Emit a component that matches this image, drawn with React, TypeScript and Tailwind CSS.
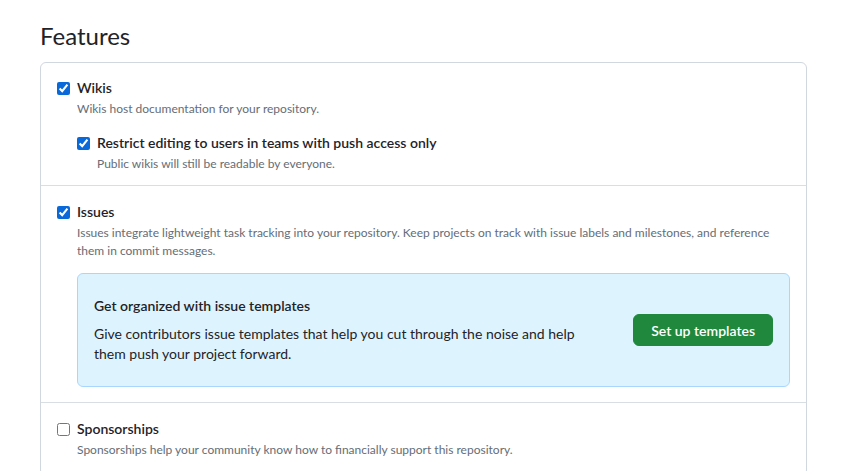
import React from 'react'

const font = { fontFamily: 'Lato, "Liberation Sans", sans-serif' }

function Check({
  checked,
  label,
  note,
}: {
  checked: boolean
  label: string
  note: React.ReactNode
}) {
  return (
    <div className="flex items-start">
      <input
        type="checkbox"
        defaultChecked={checked}
        className="mt-[4px] mr-[7px] h-[13px] w-[13px] shrink-0 accent-[#0969da]"
      />
      <div>
        <label className="block text-[14px] leading-[20px] font-semibold text-[#1f2328]">{label}</label>
        <p className="mt-[2px] text-[12px] leading-[18px] text-[#656d76]">{note}</p>
      </div>
    </div>
  )
}

export default function App() {
  return (
    <div className="min-h-screen bg-white px-10 pt-[20px]" style={font}>
      <h2 className="mb-[10px] text-[24px] leading-[32px] font-normal text-[#1f2328]">Features</h2>

      <div className="w-[767px] rounded-[6px] border border-[#d0d7de]">
        {/* Wikis */}
        <div className="border-b border-[#d8dee4] px-4 pt-[15px] pb-[12px]">
          <Check checked label="Wikis" note="Wikis host documentation for your repository." />
          <div className="mt-[15px] ml-[20px]">
            <Check
              checked
              label="Restrict editing to users in teams with push access only"
              note="Public wikis will still be readable by everyone."
            />
          </div>
        </div>

        {/* Issues */}
        <div className="border-b border-[#d8dee4] px-4 pt-[16px] pb-[15px]">
          <Check
            checked
            label="Issues"
            note="Issues integrate lightweight task tracking into your repository. Keep projects on track with issue labels and milestones, and reference them in commit messages."
          />
          <div className="mt-[13px] ml-[20px] flex items-center rounded-[6px] border border-[#a9d6ff] bg-[#ddf4ff] px-4 pt-[22px] pb-[22px]">
            <div className="w-[500px]">
              <h4 className="text-[14px] leading-[20px] font-semibold text-[#1f2328]">Get organized with issue templates</h4>
              <p className="mt-[8px] text-[14px] leading-[20px] text-[#1f2328]">
                Give contributors issue templates that help you cut through the noise and help them push your project
                forward.
              </p>
            </div>
            <button className="ml-auto h-[32px] rounded-[6px] border border-[#1f883d] bg-[#1f883d] px-[17px] text-[14px] font-semibold text-white">
              Set up templates
            </button>
          </div>
        </div>

        {/* Sponsorships */}
        <div className="px-4 pt-[16px] pb-[16px]">
          <Check
            checked={false}
            label="Sponsorships"
            note="Sponsorships help your community know how to financially support this repository."
          />
        </div>
      </div>
    </div>
  )
}
